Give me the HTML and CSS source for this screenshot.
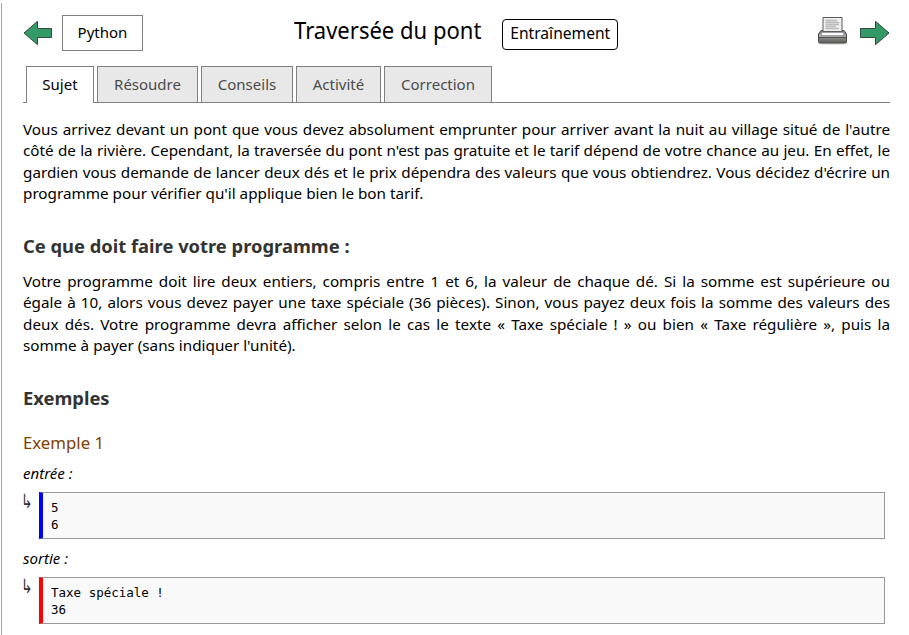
FILE: index.html
```html
<!DOCTYPE html>
<html lang="fr">
<head>
<meta charset="utf-8">
<title>Traversée du pont</title>
<link rel="stylesheet" href="styles.css">
</head>
<body>
<main class="page">
  <header class="header">
    <svg class="arrow" width="30" height="26" viewBox="0 0 30 26"><path d="M1 13 14.5 1.3V8.5H28.5V17.5H14.5V24.7Z"/></svg>
    <a class="language">Python</a>
    <h1 class="title">Traversée du pont</h1>
    <span class="badge"><span class="badge-text">Entraînement</span></span>
    <svg class="printer" width="32" height="30" viewBox="0 0 32 30">
      <defs>
        <linearGradient id="body" x2="0" y2="1"><stop stop-color="#777"/><stop offset=".45" stop-color="#aaa"/><stop offset=".6" stop-color="#858581"/><stop offset="1" stop-color="#5c5c58"/></linearGradient>
      </defs>
      <ellipse cx="16" cy="27" rx="15" ry="2" fill="#ddd"/>
      <path d="M4 14.500H27L29.500 18V25.500Q29.500 27 28 27H3Q1.500 27 1.500 25.500V18Z" fill="url(#body)" stroke="#4c4c4c"/>
      <path d="M6 1.500H25V15.500H6Z" fill="#eee" stroke="#5c5c5c"/>
      <path d="M8.500 4.500H20M8.500 6.500H22M8.500 8.500H22M8.500 10.500H19M8.500 12.500H22" stroke="#bbb" stroke-width="1.500"/>
      <path d="M4.500 16.500H26.500V19.500H4.500Z" fill="#fafafa" stroke="#888" stroke-width=".6"/>
      <path d="M2 21.500H29" stroke="#555"/>
    </svg>
    <svg class="arrow" width="30" height="26" viewBox="0 0 30 26"><path d="M29 13 15.500 1.300V8.500H.5V17.500H15.500V24.700Z"/></svg>
  </header>
  <nav class="tabs">
    <a class="tab tab-active">Sujet</a>
    <a class="tab tab-resoudre">Résoudre</a>
    <a class="tab tab-conseils">Conseils</a>
    <a class="tab tab-activite">Activité</a>
    <a class="tab tab-correction">Correction</a>
  </nav>
  <p class="text">Vous arrivez devant un pont que vous devez absolument emprunter pour arriver avant la nuit au village situé de l'autre côté de la rivière. Cependant, la traversée du pont n'est pas gratuite et le tarif dépend de votre chance au jeu. En effet, le gardien vous demande de lancer deux dés et le prix dépendra des valeurs que vous obtiendrez. Vous décidez d'écrire un programme pour vérifier qu'il applique bien le bon tarif.</p>
  <h2 class="heading">Ce que doit faire votre programme :</h2>
  <p class="text text-task">Votre programme doit lire deux entiers, compris entre 1 et 6, la valeur de chaque dé. Si la somme est supérieure ou égale à 10, alors vous devez payer une taxe spéciale (36 pièces). Sinon, vous payez deux fois la somme des valeurs des deux dés. Votre programme devra afficher selon le cas le texte «&nbsp;Taxe spéciale&nbsp;!&nbsp;» ou bien «&nbsp;Taxe régulière&nbsp;», puis la somme à payer (sans indiquer l'unité).</p>
  <h2 class="heading">Exemples</h2>
  <h3 class="example">Exemple 1</h3>
  <div class="label">entrée :</div>
  <div class="sample"><span class="hook">↳</span><pre class="code code-in">5
6</pre></div>
  <div class="label">sortie :</div>
  <div class="sample"><span class="hook">↳</span><pre class="code code-out">Taxe spéciale !
36</pre></div>
</main>
</body>
</html>
```
FILE: styles.css
```css
* { box-sizing: border-box; }
body { margin: 0; background: #fff; color: #000; font: 15px/21.25px "Noto Sans", sans-serif; overflow: hidden; }
.page { margin: 3px 0 0 1px; height: 632px; padding: 0 19px 0 21px; border-left: 1px solid #a3a6b5; }
.header { display: flex; align-items: flex-start; height: 63px; padding-top: 12px; }
.arrow { margin-top: 5px; flex: none; fill: #339966; stroke: #34483e; stroke-width: 1; }
.language { width: 81px; height: 36px; margin-left: 9px; border: 1px solid #808080; line-height: 33px; text-align: center; }
.title { width: 188px; margin: 0 0 0 151px; font: 400 24px/30px "Noto Sans", sans-serif; white-space: nowrap; transform: scaleX(.918); transform-origin: left; }
.badge { width: 116px; height: 31px; margin: 4px 0 0 20px; border: 1px solid #000; border-radius: 4px; font-size: 16px; line-height: 27px; text-align: center; }
.badge-text { display: inline-block; transform: scaleX(.975); }
.printer { margin: 1px 11px 0 auto; flex: none; }
.tabs { display: flex; gap: 3px; height: 37px; padding-left: 3px; border-bottom: 1px solid #808080; }
.tab { height: 36px; border: 1px solid #808080; border-bottom: 0; background: #e8e8e8; color: #4b4b4b; line-height: 35px; text-align: center; }
.tab-active { width: 68px; height: 37px; background: #fff; color: #000; }
.tab-resoudre { width: 101px; }
.tab-conseils { width: 92px; }
.tab-activite { width: 85px; }
.tab-correction { width: 108px; }
.text { margin: 16px 0 0; font-size: 15.26px; text-align: justify; }
.text-task { margin-top: 13px; }
.heading { margin: 29px 0 0; color: #333; font-size: 18.35px; line-height: 25px; }
.example { margin: 21px 0 8px; color: #804000; font-size: 16.8px; font-weight: 400; line-height: 24px; }
.label { font-style: italic; font-size: 15px; line-height: 20px; }
.sample { display: flex; margin: 9px 5px 9px 0; }
.hook { width: 16px; height: 18px; margin: 4px 2px 0 -2px; color: #333; font: 14px/18px "DejaVu Sans", sans-serif; transform: scaleY(1.4); transform-origin: 0 100%; }
.code { flex: 1; height: 47px; margin: 0; padding: 6px 8px; border: 1px solid #999; border-left-width: 4px; background: #f9f9f9; font: 12.5px/17px "DejaVu Sans Mono", monospace; }
.code-in { border-left-color: #00f; }
.code-out { border-left-color: #f00; }
```
